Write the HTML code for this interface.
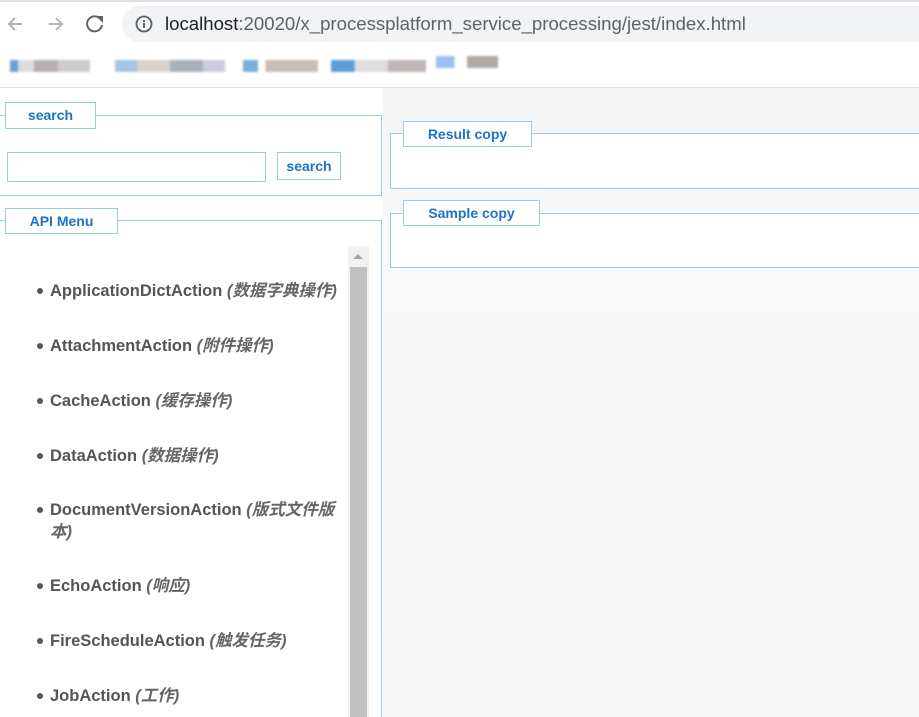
<!DOCTYPE html>
<html style="overflow:hidden;width:919px;height:717px"><head><meta charset="utf-8"><style>
*{box-sizing:border-box;margin:0;padding:0}
body{width:919px;height:717px;overflow:hidden;background:#fff;font-family:"Liberation Sans","Noto Sans CJK SC",sans-serif;position:relative}
.a{position:absolute}
.leg{position:absolute;background:#fff;border:1px solid #9cc9ef;color:#1e72c6;font-weight:bold;font-size:14px;text-align:center;line-height:24px}
.bl{border:1px solid #9cc9ef}
.li{position:absolute;left:50px;font-size:16.5px;font-weight:bold;color:#555;line-height:22px;width:295px}
.li i{color:#666;font-weight:bold}
.li:before{content:"";position:absolute;left:-13px;top:8px;width:6px;height:6px;border-radius:50%;background:#555}
.px{position:absolute;height:12px;filter:blur(1px)}
</style></head><body>
<div class="a" style="left:0;top:0;width:919px;height:2px;background:#dee1e6"></div>
<svg class="a" style="left:4px;top:13px" width="100" height="22">
<path d="M18 11H5M11 5l-6 6 6 6" stroke="#b0b3b7" stroke-width="2" fill="none"/>
<path d="M45 11h13M52 5l6 6-6 6" stroke="#b0b3b7" stroke-width="2" fill="none"/>
<path d="M97 7a7.5 7.5 0 1 0 1 5" stroke="#5f6368" stroke-width="2" fill="none"/><path d="M92 3h7v7z" fill="#5f6368"/>
</svg>
<div class="a" style="left:122px;top:6px;width:820px;height:36px;border-radius:18px;background:#f1f3f4"></div>
<svg class="a" style="left:135px;top:15px" width="18" height="18"><circle cx="9" cy="9" r="7.5" stroke="#5f6368" stroke-width="1.8" fill="none"/><rect x="8" y="8" width="2" height="5" fill="#5f6368"/><rect x="8" y="5" width="2" height="2" fill="#5f6368"/></svg>
<div class="a" style="left:165px;top:12px;font-size:18.6px;color:#202124;line-height:24px;white-space:nowrap">localhost<span style="color:#5f6368">:20020/x_processplatform_service_processing/jest/index.html</span></div>
<div class="px" style="left:10px;top:60px;width:80px;background:linear-gradient(90deg,#6a9fd0 0 10%,#ddd 10% 30%,#b8b0b0 30% 60%,#ccc 60%)"></div>
<div class="px" style="left:115px;top:60px;width:110px;background:linear-gradient(90deg,#a5c6e3 0 20%,#d9d0ca 20% 50%,#aab0b8 50% 80%,#ccd 80%)"></div>
<div class="px" style="left:243px;top:60px;width:75px;background:linear-gradient(90deg,#7aaedb 0 20%,#fff 20% 30%,#c8bdb8 30%)"></div>
<div class="px" style="left:331px;top:60px;width:95px;background:linear-gradient(90deg,#5d9cd4 0 25%,#ddd 25% 60%,#c0b5b5 60%)"></div>
<div class="px" style="left:436px;top:56px;width:62px;background:linear-gradient(90deg,#9bbff0 0 30%,#fff 30% 50%,#b0aaa5 50%)"></div>
<div class="a" style="left:0;top:87px;width:919px;height:1px;background:#ddd"></div>
<div class="a" style="left:383px;top:88px;width:536px;height:629px;background:linear-gradient(180deg,#f4f4f4,#f9f9f9 30%,#f6f6f6)"></div>
<div class="a" style="left:381px;top:220px;width:1px;height:497px;background:#9cc9ef"></div>
<div class="a bl" style="left:-2px;top:115px;width:384px;height:81px;background:#fff"></div>
<div class="leg" style="left:5px;top:102px;width:91px;height:27px">search</div>
<div class="a bl" style="left:7px;top:152px;width:259px;height:30px;background:#fff"></div>
<div class="leg" style="left:277px;top:152px;width:64px;height:28px;line-height:26px">search</div>
<div class="a" style="left:-2px;top:220px;width:384px;height:497px;background:#fff;border:1px solid #9cc9ef;border-bottom:none"></div>
<div class="leg" style="left:5px;top:208px;width:113px;height:26px">API Menu</div>
<div class="a" style="left:348px;top:246px;width:21px;height:471px;background:#f1f1f1"></div>
<div class="a" style="left:350px;top:267px;width:17px;height:450px;background:#c1c1c1"></div>
<div class="a" style="left:353px;top:254px;width:0;height:0;border-left:5px solid transparent;border-right:5px solid transparent;border-bottom:5px solid #a3a3a3"></div>
<div class="li" style="top:280px">ApplicationDictAction <i>(数据字典操作)</i></div>
<div class="li" style="top:335px">AttachmentAction <i>(附件操作)</i></div>
<div class="li" style="top:390px">CacheAction <i>(缓存操作)</i></div>
<div class="li" style="top:445px">DataAction <i>(数据操作)</i></div>
<div class="li" style="top:499px">DocumentVersionAction <i>(版式文件版本)</i></div>
<div class="li" style="top:575px">EchoAction <i>(响应)</i></div>
<div class="li" style="top:630px">FireScheduleAction <i>(触发任务)</i></div>
<div class="li" style="top:685px">JobAction <i>(工作)</i></div>
<div class="a bl" style="left:390px;top:133px;width:540px;height:56px;background:#fff"></div>
<div class="leg" style="left:403px;top:121px;width:129px;height:26px">Result copy</div>
<div class="a bl" style="left:390px;top:213px;width:540px;height:55px;background:#fff"></div>
<div class="leg" style="left:403px;top:200px;width:137px;height:26px">Sample copy</div>
</body></html>
